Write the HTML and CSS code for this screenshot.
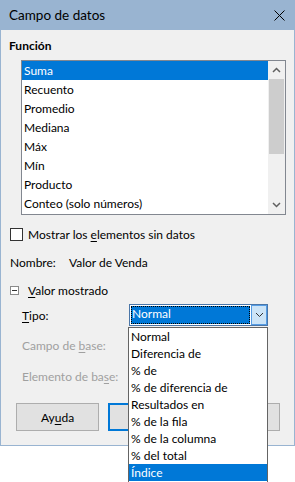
FILE: index.html
```html
<!DOCTYPE html>
<html lang="es">
<head>
<meta charset="utf-8">
<title>Campo de datos</title>
<link rel="stylesheet" href="styles.css">
</head>
<body>
<div class="window">
  <div class="titlebar">
    <span class="title">Campo de datos</span>
    <svg class="close" width="11" height="11" viewBox="0 0 11 11"><path d="M0.5 0.5 L10.5 10.5 M10.5 0.5 L0.5 10.5" stroke="#000" stroke-width="1" fill="none"/></svg>
  </div>
  <div class="content">
    <div class="section-title">Función</div>
    <div class="listbox">
      <div class="items">
        <div class="item selected">Suma</div>
        <div class="item">Recuento</div>
        <div class="item">Promedio</div>
        <div class="item">Mediana</div>
        <div class="item">Máx</div>
        <div class="item">Mín</div>
        <div class="item">Producto</div>
        <div class="item">Conteo (solo números)</div>
      </div>
      <div class="scrollbar">
        <svg class="arrow" width="9" height="6" viewBox="0 0 9 6"><path d="M1 5 L4.5 1.5 L8 5" stroke="#606060" stroke-width="1.5" fill="none"/></svg>
        <div class="track"><div class="thumb"></div></div>
        <svg class="arrow" width="9" height="6" viewBox="0 0 9 6"><path d="M1 1 L4.5 4.5 L8 1" stroke="#606060" stroke-width="1.5" fill="none"/></svg>
      </div>
    </div>
    <div class="check-row">
      <span class="checkbox"></span>
      <span>Mostrar los <u>e</u>lementos sin datos</span>
    </div>
    <div class="name-row">
      <span class="name-label">Nombre:</span>
      <span>Valor de Venda</span>
    </div>
    <div class="expander-row">
      <span class="expander"><span class="minus"></span></span>
      <span><u>V</u>alor mostrado</span>
    </div>
    <div class="field-row">
      <span class="field-label"><u>T</u>ipo:</span>
      <div class="combo">
        <div class="combo-value"><span class="focus">Normal</span></div>
        <div class="combo-btn">
          <svg width="9" height="6" viewBox="0 0 9 6"><path d="M1 1 L4.5 4.5 L8 1" stroke="#333" stroke-width="1" fill="none"/></svg>
        </div>
      </div>
    </div>
    <div class="field-row disabled">
      <span class="field-label">Campo de <u>b</u>ase:</span>
    </div>
    <div class="field-row disabled">
      <span class="field-label">Elemento de ba<u>s</u>e:</span>
    </div>
    <div class="buttons">
      <div class="btn">Ay<u>u</u>da</div>
      <div class="btn default"><u>A</u>ceptar</div>
      <div class="btn">Cancelar</div>
    </div>
  </div>
</div>
<div class="popup">
  <div class="popup-item">Normal</div>
  <div class="popup-item">Diferencia de</div>
  <div class="popup-item">% de</div>
  <div class="popup-item">% de diferencia de</div>
  <div class="popup-item">Resultados en</div>
  <div class="popup-item">% de la fila</div>
  <div class="popup-item">% de la columna</div>
  <div class="popup-item">% del total</div>
  <div class="popup-item selected">Índice</div>
</div>
</body>
</html>
```
FILE: styles.css
```css
* { box-sizing: border-box; }
html, body { margin: 0; padding: 0; background: #ffffff; }
body {
  font-family: "Lato", "Open Sans", "Liberation Sans", sans-serif;
  font-size: 12px;
  color: #000;
  width: 295px;
  height: 482px;
  overflow: hidden;
  position: relative;
}
u { text-decoration: underline; text-underline-offset: 2px; text-decoration-thickness: 1px; }

.window {
  width: 295px;
  height: 446px;
  background: #f0f0f0;
  border: 1px solid #99b4d1;
  border-top: none;
}
.titlebar {
  height: 30px;
  background: #99b4d1;
  margin: 0 -1px;
  display: flex;
  align-items: center;
  justify-content: space-between;
  padding: 0 10px 0 9px;
}
.title { font-size: 13.5px; color: #000; }
.close { display: block; }

.content { padding: 8px 0 0 8px; }
.section-title { font-weight: bold; line-height: 16px; height: 16px; }

.listbox {
  margin: 6px 0 0 12px;
  width: 265px;
  height: 155px;
  border: 1px solid #828790;
  background: #fff;
  display: flex;
}
.items { flex: 1; }
.item { height: 19px; line-height: 19px; padding-left: 2px; }
.item.selected { background: #0078d7; color: #fff; }
.scrollbar {
  width: 17px;
  background: #f0f0f0;
  display: flex;
  flex-direction: column;
  align-items: center;
}
.arrow { display: block; margin: 6px 0; }
.track { flex: 1; width: 100%; padding: 0 1px; }
.thumb { margin-top: 0; height: 75px; background: #cdcdcd; }

.check-row {
  margin-top: 11px;
  height: 16px;
  display: flex;
  align-items: center;
  gap: 5px;
  padding-left: 1px;
}
.checkbox {
  width: 13px; height: 13px;
  border: 1px solid #333;
  background: #fff;
  display: block;
}
.name-row {
  margin-top: 13px;
  height: 16px;
  line-height: 16px;
  display: flex;
  padding-left: 1px;
}
.name-label { width: 59px; }
.expander-row {
  margin-top: 11px;
  height: 16px;
  display: flex;
  align-items: center;
  gap: 9px;
  padding-left: 1px;
}
.expander {
  width: 9px; height: 9px;
  border: 1px solid #8a8a8a;
  display: flex; align-items: center; justify-content: center;
  background: #fff;
}
.minus { width: 5px; height: 1px; background: #333; display: block; }

.field-row {
  margin-top: 6px;
  height: 22px;
  display: flex;
  align-items: center;
  padding-left: 13px;
}
.field-row.disabled { color: #a0a0a0; margin-top: 8px; }
.field-row.disabled + .field-row.disabled { margin-top: 9px; }
.field-label { width: 107px; }
.combo {
  width: 139px; height: 22px;
  border: 1px solid #4a76a8;
  display: flex;
  background: #fff;
}
.combo-value { flex: 1; padding: 1px; }
.focus {
  display: block;
  height: 100%;
  background: #0078d7;
  color: #fff;
  line-height: 16px;
  padding-left: 1px;
  outline: 1px dotted #000;
  outline-offset: -1px;
}
.combo-btn {
  width: 16px;
  background: #cce4f7;
  border: 1px solid #569de5;
  display: flex; align-items: center; justify-content: center;
}

.buttons {
  margin-top: 16px;
  margin-left: 7px;
  display: flex;
  gap: 9px;
}
.btn {
  width: 83px; height: 28px;
  background: #e1e1e1;
  border: 1px solid #adadad;
  display: flex; align-items: center; justify-content: center;
}
.btn.default { border: 2px solid #0078d7; }
.btn + .btn + .btn { margin-left: -3px; }

.popup {
  position: absolute;
  left: 128px;
  top: 327px;
  width: 140px;
  height: 160px;
  background: #fff;
  border: 1px solid #646464;
  padding-top: 0;
}
.popup-item { height: 17px; line-height: 17px; padding-left: 2px; }
.popup-item.selected { background: #0078d7; color: #fff; }
```
